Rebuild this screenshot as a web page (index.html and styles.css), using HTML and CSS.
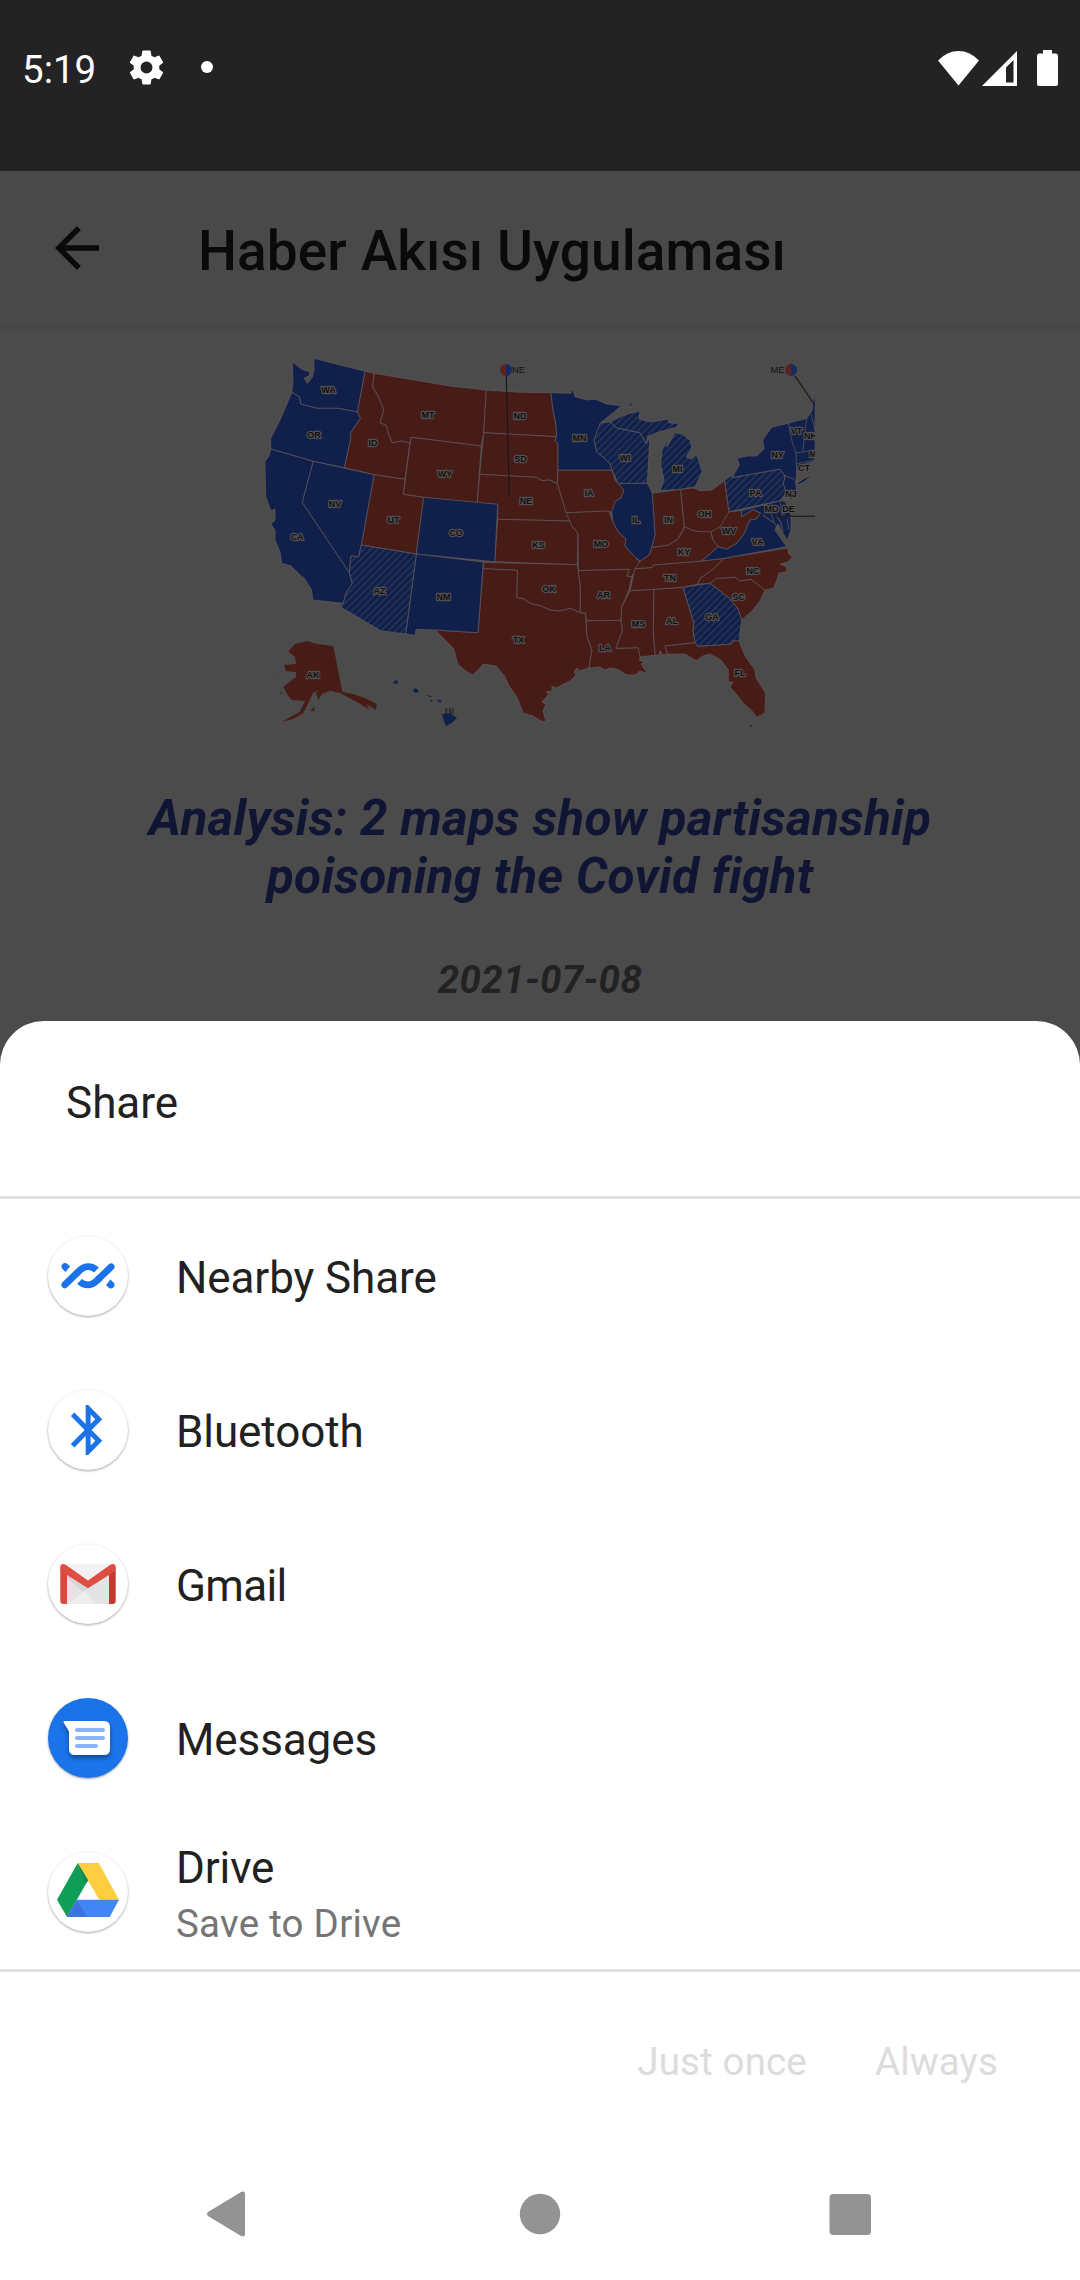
FILE: index.html
```html
<!DOCTYPE html>
<html lang="tr">
<head>
<meta charset="utf-8">
<title>Haber Akısı Uygulaması</title>
<link rel="stylesheet" href="styles.css">
</head>
<body>
<div class="screen">
  <div class="status">
    <div class="status-left">
      <span class="time">5:19</span>
      <svg class="gear" width="41" height="41" viewBox="0 0 24 24"><path fill="#fff" d="M19.43 12.98c.04-.32.07-.64.07-.98s-.03-.66-.07-.98l2.11-1.65c.19-.15.24-.42.12-.64l-2-3.46c-.12-.22-.39-.3-.61-.22l-2.49 1c-.52-.4-1.08-.73-1.69-.98l-.38-2.65C14.46 2.18 14.25 2 14 2h-4c-.25 0-.46.18-.49.42l-.38 2.65c-.61.25-1.17.59-1.69.98l-2.49-1c-.23-.09-.49 0-.61.22l-2 3.46c-.13.22-.07.49.12.64l2.11 1.65c-.04.32-.07.65-.07.98s.03.66.07.98l-2.11 1.65c-.19.15-.24.42-.12.64l2 3.46c.12.22.39.3.61.22l2.49-1c.52.4 1.08.73 1.69.98l.38 2.65c.03.24.24.42.49.42h4c.25 0 .46-.18.49-.42l.38-2.65c.61-.25 1.17-.59 1.69-.98l2.49 1c.23.09.49 0 .61-.22l2-3.46c.12-.22.07-.49-.12-.64zM12 15.5a3.5 3.5 0 1 1 0-7 3.5 3.5 0 0 1 0 7z"/></svg>
      <span class="dot"></span>
    </div>
    <svg class="signals" width="122" height="38" viewBox="937 48 122 38" fill="#fff">
      <path d="M958.5 84.5 938 59.5Q947 50 958.500 50T979 59.500z"/>
      <path fill-rule="evenodd" d="M982 85 1017 50V85zM1006 81.500H1013.500V59L1006 66.500z"/>
      <path d="M1043 49H1052V52.500H1056Q1058 52.500 1058 55V83Q1058 85 1056 85H1039Q1037 85 1037 83V55Q1037 52.500 1039 52.500H1043z"/>
    </svg>
  </div>

  <header class="appbar">
    <svg width="66" height="66" viewBox="0 0 24 24"><path fill="#0a0a0a" d="M20 11H7.830l5.590-5.590L12 4l-8 8 8 8 1.410-1.410L7.830 13H20z"/></svg>
    <h1>Haber Akısı Uygulaması</h1>
  </header>

  <main class="article">
    <svg class="map" width="550" height="385" viewBox="265 345 550 385">
      <defs>
        <pattern id="hatch" width="5" height="5" patternUnits="userSpaceOnUse" patternTransform="rotate(45)"><rect width="5" height="5" fill="#10204b"/><rect width="1.200" height="5" fill="#2b3a55"/></pattern>
      </defs>
      <g class="red">
        <path d="M365 371.300 374.300 373.300 372.700 386.700 378 396 384 410 380 422.700 386 425 389 435 392.300 442.700 401 441 410 442.700 405 479.300 374 474.700 344.300 467.700 351 436.700 350 433.300 360.300 418.300 357.300 412z"/>
        <path d="M374.300 373.300 450 386 486.300 390 483.700 432.700 481.300 446 411 437.300 410 442.700 401 441 392.300 442.700 389 435 386 425 380 422.700 384 410 378 396 372.700 386.700z"/>
        <path d="M411 437.300 481.300 446 477.300 503 423.700 497.300 403.300 494.300z"/>
        <path d="M374 474.700 405 479.300 403.300 494.300 423.700 497.300 416.300 554 361.300 545z"/>
        <path d="M486.300 390Q518 393 551 392.700L553 410 556 425 556.700 436.700 483.700 432.700z"/>
        <path d="M483.700 432.700 556.700 436.700 555 441 558 443.300V470L557.300 483.300 549 480 541.700 480.700 536.700 477.300 479.700 474.300z"/>
        <path d="M479.700 474.300 536.700 477.300 541.700 480.700 549 480 557.300 483.300 563.300 503.300 570 521 497.700 519.300V504.300L477.300 503z"/>
        <path d="M497.700 519.300 570 521 572 526 578 533.300 577.300 564.700 494.700 561.700z"/>
        <path d="M483.700 562.300 577.300 564.700 578.300 570.700 580.300 586V612.700L570 608.300 560 611 550 610 541 606 530 603.300 524 599 516.700 597.700 517.300 570.300 483 568.700z"/>
        <path d="M483 568.700 517.300 570.300 516.700 597.700 524 599 530 603.300 541 606 550 610 560 611 570 608.300 580.300 612.700 585.700 613.300 586.700 635 592 650 589 668 579 671 577 668 574 672 576 675 570 681 556 688 552 686 552 691 546 692 549 694 542 702 546 704 543 711 546 722 541 721 533 716 523.300 713.300 520 705 516.700 696.700 509 686 505 676.700 496 666 483.300 664 478 670 472.700 675 466 671 458.300 665 453.300 648.300 444 639 435.300 630 478 632.700z"/>
        <path d="M558 470 612 470 615 480 624 490 621 498 615 501.700 616 507 611.700 511.700 566 512.700 563.300 503.300 557.300 483.300z"/>
        <path d="M566 512.700 609 511 613 522 619 533 626 539 625 546 634 556 640 562 637 568 631.700 576.700 626.700 576 629.300 569.300 578.300 570.700 578 533.300 572 526z"/>
        <path d="M578.300 570.700 629.300 569.300 626.700 576 631.700 576.700 629 590 621.700 606.700 621 620.300 586.300 620.700 585.700 613.300 580.300 612.700V586z"/>
        <path d="M586.300 620.700 621 620.300 622.500 630 616 648.300 638.300 647.700 641 656 639 660 645 662 641 664 648 674 640 671 635 675 627 675 617 669 610 668 605 670 600 667 589 668 592 650 586.700 635z"/>
        <path d="M630 590.700 654 589.300 653.300 633 655.300 655 640 657 638.300 647.700 616 648.300 622.500 630 621 620 621.700 606.700z"/>
        <path d="M654 589.300 683 587.300 694 623.300 693 630 695 642.700 665 646 667.700 654.300 663 655 660 651 659 655 655.300 655 653.300 633z"/>
        <path d="M695 642.700 697.700 646.300 731.700 644 732.700 640.700 739 640.700 745 656 755 670 756 678 765.700 693.300 765 713.300 756.700 717.300 752 711 743.300 703.300 737 695 730 687 733 682 728.300 682 728.300 670 721 660 710 654 703 656 696 660.700 685 654 667.700 654.300 665 646z"/>
        <path d="M710 583.300 716.700 578.300 736 577.300 739 581 751 579.300 765 590 760 601 752 611 741.700 620 738 609 729 598z"/>
        <path d="M724.300 558.300 787.700 548 789 554 792.300 557 788 562 780 564 787 567 786.700 571.700 779 573 777 580 773.300 588.300 765 590 751 579.300 739 581 736 577.300 716.700 578.300 710 583.300 697.300 584.300 700 578.300 712 570z"/>
        <path d="M635 568.700 652 567.500 653.300 565 701.700 561 724.300 558.300 712 570 700 578.300 697.300 584.300 683 587.300 654 589.300 630 590.700z"/>
        <path d="M635 568.700 640 561 649 555 651.700 547.500 668.300 545 678 539 685 526.700 692 530 700 531.700 710 529 713 540 718.300 546.700 701.700 561 653.300 565 652 567.500z"/>
        <path d="M652.300 493.300 680.700 489.300 684.300 526.700 678 539 668.300 545 651.700 547.500 655 535z"/>
        <path d="M680.700 489.300 694 488 700 490.700 711.700 490 724.700 480.700 729 511.700 727 522 720 527 715 534 711 531.700 700 531.700 692 530 684.300 526.700z"/>
        <path d="M729 511.700 741.700 510.700V516.700L753.300 509.300 760.700 513.300 756 519 750 520 744 534 736.700 543.300 726.700 549.300 718.300 546.700 713 540 711 531.700 720 527z"/>
        <path class="bare" d="M288.300 651.700 295 644 307.300 641 316.700 644 333.300 646 342.300 691.700 353 694 365 698 376.700 704 376 710 366 704 370 710 357 702 340 693 330 690.700 322 694 318.300 700 316 693 320 690 313 693 303.300 713.300 293 719 281.700 721.700 300 711.700 305 701 291.700 700 287 694 283.300 686.700 296 677V672L286 671 284 665 296 664 295 657z"/>
        <path class="bare" d="M310 711 315 706 314 711zM281 692 283 694 279 693zM273 674 277 677 275 676zM749 726 753 724 751 727z"/>
      </g>
      <g class="blue">
        <path d="M292.300 361.700 301.700 369.300 309.300 371.700 310 375 304.300 378.300 307.300 383.300 312.300 377.300 314 370 313.700 358.300 365 371.300 357.300 412 338.300 408.300 316.700 408.300 304 405 300.700 404 299.300 396.700 291.700 392.300 293 382z"/>
        <path d="M291.700 392.300 299.300 396.700 300.700 404 316.700 408.300 338.300 408.300 357.300 412 360.300 418.300 350 433.300 351 436.700 344.300 467.700 313.300 461.300 270.700 449V438.300L280 420 287 404z"/>
        <path d="M270.700 449 313.300 461.300 302.300 502.300 349.300 572.700 352.300 583.300 346 593.300 343.300 603.300 312.700 600 311.700 590 304 578 300 575 291 566 281.700 563.300 280 552 275 540 275 530 271 524 275 520V509L271 511 265.700 496.700 265 461.700 269 456z"/>
        <path d="M313.300 461.300 374 474.700 361.300 545 358.700 556.700 351 556 349.300 572.700 302.300 502.300z"/>
        <path d="M423.700 497.300 497.700 504.300 494.700 561.700 416.300 554z"/>
        <path d="M416.300 554 483.300 562 478 632.700 435.300 630 416 629.300 415.300 635.300 405.700 634z"/>
        <path d="M551 392.700 571 393.300 572.300 388.300 575 396.700 586.700 400 595 399 606.700 404 621.700 405.700 600 423.300 599 432 594 440 596.700 451.700 610 463.300 612 470 558 470V443.300L555 441 556.700 436.700 556 425 553 410z"/>
        <path d="M618.300 483.700 647.300 483 652.300 493.300 655 535 651.700 547.500 649 555 640 561 634 556 625 546 626 539 619 533 613 522 611.700 511.700 615 501.700 621 498 624 490z"/>
        <path d="M732.300 477.700 739.300 465 737.300 458.300 747 456 756.700 456 764 449 762.700 440 771.700 427.300 788.300 423.300 806.700 418.300 812 411 814.300 390 815 400V461L802 465 797 470 796.700 483 785 476 780 469.300z"/>
        <path d="M797 483 805 478 813 474 804 482 797 485z"/>
        <path d="M785 476 795 479.300 796.700 490 791.700 500 785 495 783.300 483.300z"/>
        <path d="M741.700 510.700 780 500.700 785 501 791 515 791 530 787 541 782 532 778 524 775 530 786.700 546.700 724.300 558.300 701.700 561 718.300 546.700 726.700 549.300 736.700 543.300 744 534 750 520 756 519 760.700 513.300 753.300 509.300 741.700 516.700z"/>
        <path class="bare" d="M393 682 397 680 398 683 395 684zM413 690 416 688 419 692 415 693zM426 695 432 696 430 697zM436 699 442 701 440 703zM442 714 450 713 457 718 453 722 446 726 444 721zM430 700 433 700 431 702zM629 405 633 402 630 406z"/>
      </g>
      <g class="hatched">
        <path d="M361.300 545 416.300 554 405.700 634 380.700 630.700 340 606.700 343.300 603.300 346 593.300 352.300 583.300 349.300 572.700 351 556 358.700 556.700z"/>
        <path d="M600 423.300 610 421.700 617 428 640 432.700 646 443.300 650 437 647.300 483 618.300 483.700 612 470 610 463.300 596.700 451.700 594 440z"/>
        <path d="M610 421.700 620 417 631 413 640 411 639 419 650 422 668.300 419 669 423 678.300 423.300 677 427 660 431.700 648 436 646 443.300 640 432.700 617 428z"/>
        <path d="M675 432.700 682 434 690 440 692 448 686 457 692 459 696.700 454 702.300 472 695 486.700 680.700 489.300 660 490.700 664 480 660.700 465 662 450 668 439 667 447z"/>
        <path d="M724.700 480.700 731.700 475 732.300 477.700 780 469.300 785 476 783.300 483.300 786 493 780 500.700 729 511.700z"/>
        <path d="M683 587.300 710 583.300 729 598 738 609 741.700 620 739 640.700 732.700 640.700 731.700 644 697.700 646.300 695 642.700 693 630 694 623.300z"/>
      </g>
      <path class="borders" d="M788.300 423.300 791.700 440 796 453.300 797 483M806.700 418.300 804 440 803 451M811 414 815 430M796 453 815 450M796 464 815 460M780 500 782 516 791 517M764 507 770 512 778 530M787 519 789 530"/>
      <path class="water" d="M312 362 311 374M776 515 781 523 783 534 788 541M783 508 784 516M763 515 774 523"/>
      <path class="leader" d="M506.300 376 509.300 495M795 376 815 405.500M775 516.300H815"/>
      <path fill="#5a2320" d="M506 364a6 6 0 0 0 0 12zM791 364a6 6 0 0 0 0 12z"/>
      <path fill="#142a66" d="M506 364a6 6 0 0 1 0 12zM791 364a6 6 0 0 1 0 12z"/>
      <g class="labels">
        <text x="328.500" y="393.300">WA</text><text x="314" y="438">OR</text><text x="373" y="446">ID</text><text x="428" y="417.500">MT</text><text x="445" y="477">WY</text><text x="335" y="506.500">NV</text><text x="393.500" y="522.500">UT</text><text x="297" y="540">CA</text><text x="379.500" y="594">AZ</text><text x="443.500" y="599.500">NM</text><text x="456" y="535.500">CO</text><text x="520" y="419">ND</text><text x="520.500" y="461.500">SD</text><text x="526" y="503.500">NE</text><text x="538.500" y="548">KS</text><text x="549" y="592">OK</text><text x="518.500" y="643">TX</text><text x="579.500" y="440.500">MN</text><text x="589" y="495.500">IA</text><text x="601" y="547">MO</text><text x="603.500" y="598">AR</text><text x="605" y="651">LA</text><text x="638.500" y="627">MS</text><text x="672" y="623.500">AL</text><text x="625" y="461">WI</text><text x="677.500" y="472">MI</text><text x="636" y="523">IL</text><text x="668.500" y="522.500">IN</text><text x="704.500" y="516.500">OH</text><text x="729" y="534">WV</text><text x="684" y="554.500">KY</text><text x="670" y="580.500">TN</text><text x="757.500" y="545">VA</text><text x="753" y="574">NC</text><text x="738.500" y="600">SC</text><text x="712" y="620">GA</text><text x="740" y="675.500">FL</text><text x="755.500" y="495.500">PA</text><text x="777.500" y="457.500">NY</text><text x="796.500" y="434">VT</text><text x="810.500" y="439">NH</text><text x="813" y="457">M</text><text x="804" y="471">CT</text><text x="791" y="497">NJ</text><text x="771.500" y="511.500">MD</text><text x="788.500" y="511.500">DE</text><text x="313" y="678">AK</text>
        <text class="plain" x="449.500" y="713.500">HI</text><text class="plain" x="518.500" y="373.300">NE</text><text class="plain" x="777.500" y="373.300">ME</text>
      </g>
    </svg>
    <h2>Analysis: 2 maps show partisanship<br>poisoning the Covid fight</h2>
    <p class="date">2021-07-08</p>
  </main>

  <section class="sheet">
    <h3>Share</h3>
    <ul>
      <li>
        <svg class="icon" viewBox="0 0 88 88"><circle class="disc" cx="44" cy="44" r="40"/><g fill="none" stroke="#1a73e8" stroke-width="6.800"><path stroke-linecap="round" d="M20.800 52.800 33 41"/><path d="M32 42 35.500 38.500Q39.500 34.700 44 34.700 49 34.700 52.500 38"/><path stroke-linecap="round" d="M67.200 34.800 55 46.500"/><path d="M56 45.500 52.500 49Q48.500 52.800 44 52.800 39 52.800 35.500 49.500"/></g><path fill="#1a73e8" d="M21 31a3.500 3.500 0 0 1 2.500 1L26 34.500 21.500 40 18.500 37A3.500 3.500 0 0 1 21 31zM67 56.500a3.500 3.500 0 0 1-2.500-1L62 53 66.500 47.500 69.500 50.500A3.500 3.500 0 0 1 67 56.500z"/></svg>
        <span class="label">Nearby Share</span>
      </li>
      <li>
        <svg class="icon" viewBox="0 0 88 88"><circle class="disc" cx="44" cy="44" r="40"/><path fill="#1a73e8" transform="translate(14.500 14) scale(2.470 2.500)" d="M17.710 7.710 12 2h-1v7.590L6.410 5 5 6.410 10.590 12 5 17.590 6.410 19 11 14.410V22h1l5.710-5.710-4.300-4.290zM13 5.830l1.880 1.880L13 9.590zM14.880 16.290 13 18.170v-3.760z"/></svg>
        <span class="label">Bluetooth</span>
      </li>
      <li>
        <svg class="icon" viewBox="0 0 88 88"><circle class="disc" cx="44" cy="44" r="40"/><path fill="#e4e4e4" d="M20 24H68V64H20z"/><path fill="#f2f2f2" d="M20 24H68L44 42z"/><path fill="#d6d6d6" d="M23 32 44 48.500 39 52 23 38z"/><path fill="#eeeeee" d="M23 64 41 51 52 64z"/><path fill="#d84a3e" d="M16.300 27H23V64H19.300Q16.300 64 16.300 61z"/><path fill="#c5392b" d="M65 27H71.700V61Q71.700 64 68.700 64H65z"/><path fill="#dd4f43" d="M16.300 29V27Q16.300 24 19 24 20.500 24 22 25L44 40.500 66 25Q67.500 24 69 24 71.700 24 71.700 27V29L70.500 31.500 44 48.300 17.500 31.500z"/></svg>
        <span class="label tight">Gmail</span>
      </li>
      <li>
        <svg class="icon" viewBox="0 0 88 88"><circle class="disc disc-blue" cx="44" cy="44" r="40"/><path class="bubble" d="M20.500 27H60Q66 27 66 33V55Q66 61 60 61H31Q25 61 25 55V37.500L19.800 28.800Q19 27 20.500 27z"/><path stroke="#8ab4f8" stroke-width="4.200" stroke-linecap="round" d="M33 36H59M33 44H59M33 52H52"/></svg>
        <span class="label">Messages</span>
      </li>
      <li>
        <svg class="icon" viewBox="0 0 88 88"><circle class="disc" cx="44" cy="44" r="40"/><path fill="#109d58" d="M33.700 15 44 32.300 23 69 13 51.700z"/><path fill="#ffcd40" d="M33.700 15H54.800L75 51.700H55.300z"/><path fill="#4285f4" d="M33 51.700H75L65.700 69H23z"/><path fill="#3b74de" d="M33 51.700 43 69H23z"/><path fill="#0d884b" d="M33.700 15 44 32.300 42 35.500z"/></svg>
        <span class="label">Drive<small>Save to Drive</small></span>
      </li>
    </ul>
    <div class="actions"><span>Just once</span><span>Always</span></div>
    <nav>
      <svg width="48" height="48" viewBox="0 0 48 48"><path d="M3 22Q1 24 3 26L36 46Q40 47.500 40 44V4Q40 .500 36 2z"/></svg>
      <svg width="48" height="48" viewBox="0 0 48 48"><circle cx="24" cy="24" r="20.200"/></svg>
      <svg width="48" height="48" viewBox="0 0 48 48"><rect x="2.500" y="4" width="41.500" height="41" rx="4"/></svg>
    </nav>
  </section>
</div>
</body>
</html>
```
FILE: styles.css
```css
* { box-sizing: border-box; margin: 0; padding: 0; }
body { font-family: Roboto, sans-serif; background: #4b4b4b; }
svg { display: block; flex: none; }
.screen { width: 1080px; height: 2280px; overflow: hidden; display: flex; flex-direction: column; background: #4b4b4b; }

.status { height: 171px; padding: 0 21px 36px 22px; background: #232323; display: flex; align-items: center; justify-content: space-between; }
.status-left { display: flex; align-items: center; }
.time { width: 76px; margin-top: 5px; font-size: 38.5px; line-height: 46px; color: #fff; }
.gear { margin: 0 0 1px 28px; }
.dot { width: 12px; height: 12px; margin: 0 0 1px 34px; border-radius: 50%; background: #fff; }

.appbar { position: relative; height: 154px; padding: 0 44px; background: #494949; display: flex; align-items: center; gap: 88px; box-shadow: 0 2px 5px rgba(0, 0, 0, .15); }
.appbar h1 { margin-top: 6px; font-size: 55px; line-height: 64px; font-weight: 500; letter-spacing: .08px; color: #0a0a0a; white-space: nowrap; }

.article { height: 696px; padding-top: 20px; display: flex; flex-direction: column; align-items: center; text-align: center; font-style: italic; font-weight: 700; }
.article h2 { margin-top: 59px; font-size: 49.5px; line-height: 58px; letter-spacing: .22px; color: #111534; white-space: nowrap; }
.date { margin-top: 52px; font-size: 38.5px; line-height: 46px; letter-spacing: .35px; color: #222; }

.map { font-style: normal; }
.red path, .blue path, .hatched path { stroke: #62595b; stroke-width: .7; stroke-linejoin: round; }
.red { fill: #471c17; }
.blue { fill: #10204b; }
.hatched { fill: url(#hatch); }
.map .bare { stroke: none; }
.borders { fill: none; stroke: #62595b; stroke-width: .7; }
.water { fill: none; stroke: #4b4b4b; stroke-width: 1.3; }
.leader { fill: none; stroke: #151515; stroke-width: 1.1; }
.labels { font: 700 9px "Liberation Sans", sans-serif; fill: #101010; text-anchor: middle; paint-order: stroke; stroke: #555152; stroke-width: 2.4px; stroke-linejoin: round; }
.labels .plain { stroke: none; font-weight: 400; font-size: 9.3px; }

.sheet { height: 1259px; background: #fff; border-radius: 44px 44px 0 0; color: #212121; }
.sheet h3 { height: 178px; padding: 56px 66px 0; border-bottom: 3px solid #e0e0e0; font-size: 44px; line-height: 52px; font-weight: 400; }
.sheet ul { list-style: none; border-bottom: 3px solid #e0e0e0; }
.sheet li { height: 154px; padding: 0 44px; display: flex; align-items: center; gap: 44px; }
.icon { width: 88px; height: 88px; overflow: visible; }
.disc { fill: #fff; filter: drop-shadow(0 1px 1px rgba(0, 0, 0, .36)); }
.disc-blue { fill: #1a73e8; }
.bubble { fill: #fff; filter: drop-shadow(0 3px 2px rgba(0, 0, 0, .35)); }
.label { padding-top: 3px; font-size: 44px; line-height: 52px; letter-spacing: -.1px; }
.tight { letter-spacing: -.7px; }
.label small { display: block; margin-top: 7px; font-size: 38.5px; line-height: 45px; letter-spacing: .25px; color: #757575; }
.actions { height: 176px; padding: 4px 82px 0 0; display: flex; align-items: center; justify-content: flex-end; gap: 68px; font-size: 38.5px; line-height: 46px; letter-spacing: .15px; color: #dcdcdc; }
nav { height: 132px; padding: 0 205px; display: flex; align-items: center; justify-content: space-between; fill: #939393; }
```
